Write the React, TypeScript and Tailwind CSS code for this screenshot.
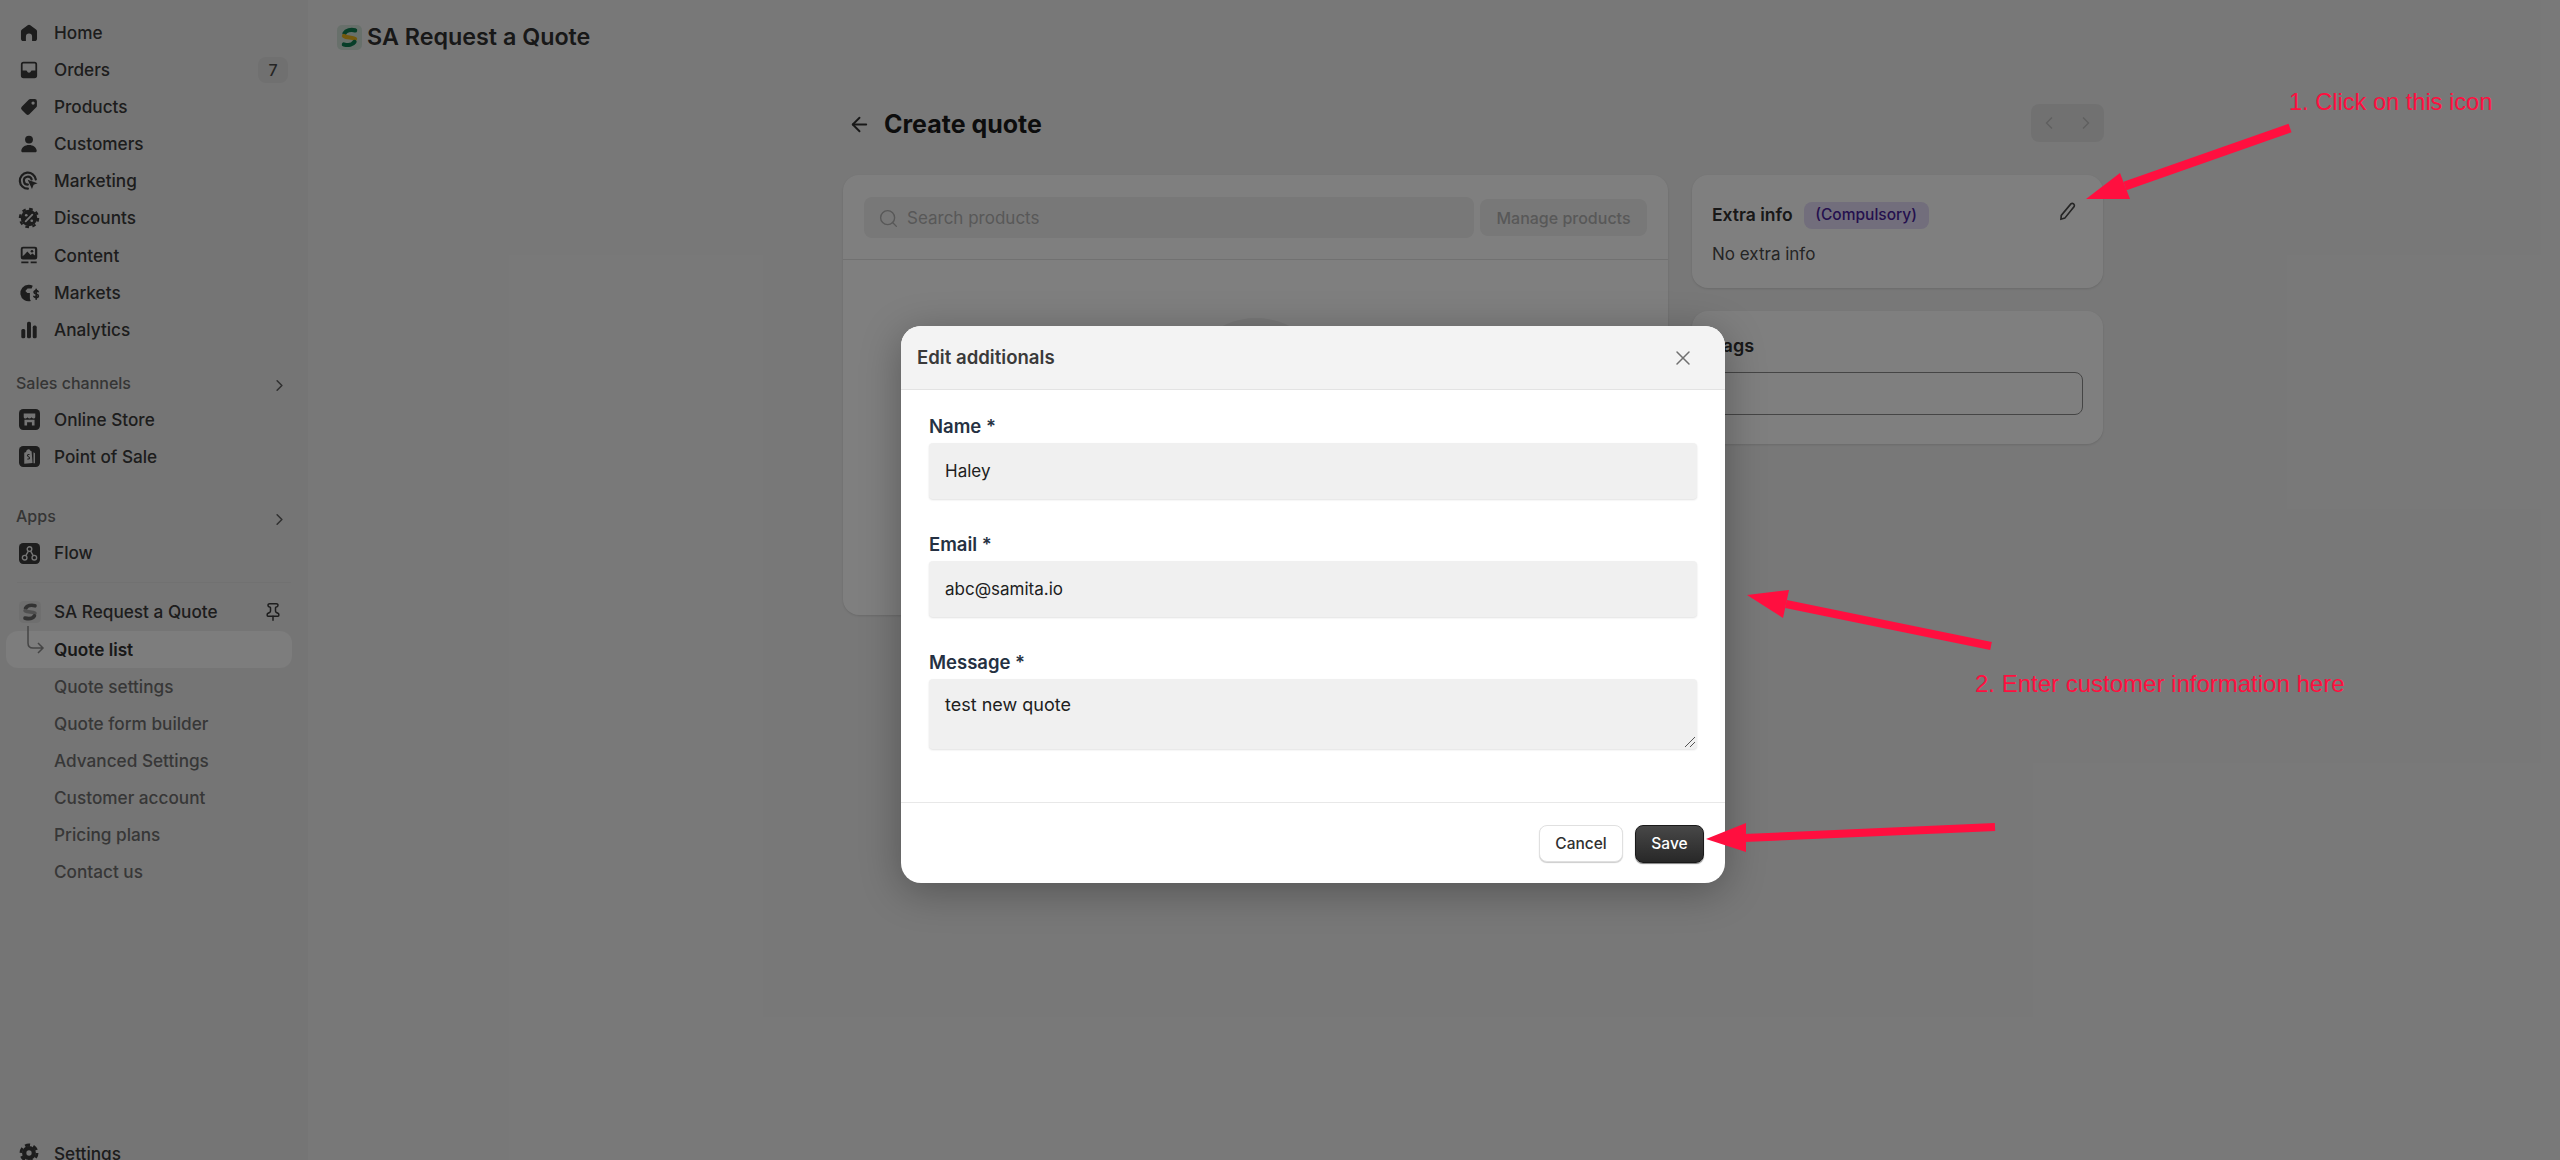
import { ArrowLeft, ChevronLeft, ChevronRight, Pin, Search, X } from "lucide-react";
import type { ReactNode } from "react";

function Glyph({ children, className = "" }: { children: ReactNode; className?: string }) {
  return (
    <svg viewBox="0 0 20 20" fill="currentColor" className={`h-[22px] w-[22px] ${className}`}>
      {children}
    </svg>
  );
}

const HomeIcon = () => (
  <Glyph>
    <path d="M8.8 2.9 3.6 6.8A2.2 2.2 0 0 0 2.7 8.6v6.6c0 1.2 1 2.1 2.1 2.1h2.4v-4a2.8 2.8 0 0 1 5.6 0v4h2.4c1.2 0 2.1-.9 2.1-2.1V8.6c0-.7-.3-1.4-.9-1.8l-5.2-3.9a1.9 1.9 0 0 0-2.4 0z" />
  </Glyph>
);

const OrdersIcon = () => (
  <Glyph>
    <path
      fillRule="evenodd"
      d="M5 2.6h10A2.4 2.4 0 0 1 17.4 5v10a2.4 2.4 0 0 1-2.4 2.4H5A2.4 2.4 0 0 1 2.6 15V5A2.4 2.4 0 0 1 5 2.6zM4.2 5v5.4h3.2c.4 0 .7.3.8.6.2.9 1 1.5 1.8 1.5s1.6-.6 1.8-1.5c.1-.3.4-.6.8-.6h3.2V5c0-.4-.4-.8-.8-.8H5c-.4 0-.8.4-.8.8z"
    />
  </Glyph>
);

const ProductsIcon = () => (
  <Glyph>
    <path
      fillRule="evenodd"
      d="M11.2 2.8h4a2 2 0 0 1 2 2v4c0 .6-.2 1.100-.6 1.500l-6.300 6.300a2 2 0 0 1-2.800 0l-4.100-4.100a2 2 0 0 1 0-2.800l6.300-6.300c.4-.4.9-.6 1.500-.6zM13.700 7.900a1.500 1.500 0 1 0 0-3 1.500 1.500 0 0 0 0 3z"
    />
  </Glyph>
);

const CustomersIcon = () => (
  <Glyph>
    <circle cx="10" cy="6" r="3.600" />
    <path d="M10 11c-3.700 0-6.500 2-7 4.800-.2 1 .5 1.700 1.400 1.700h11.200c.9 0 1.600-.7 1.400-1.700-.5-2.800-3.300-4.800-7-4.800z" />
  </Glyph>
);

const MarketingIcon = () => (
  <Glyph>
    <path
      d="M9 17a7.300 7.300 0 1 1 7.200-8.400M9 13.300a3.600 3.600 0 1 1 3.400-4.700"
      fill="none"
      stroke="currentColor"
      strokeWidth="2"
      strokeLinecap="round"
    />
    <path d="m8.800 8.800 9 3.200-3.600 1.500-1.500 3.800z" />
  </Glyph>
);

const DiscountsIcon = () => (
  <Glyph>
    <circle cx="10" cy="10" r="7.500" />
    <circle cx="10" cy="10" r="8.300" fill="none" stroke="currentColor" strokeWidth="2" strokeDasharray="3.300 3.200" />
    <path d="m7 13 6-6" stroke="#ebebeb" strokeWidth="1.700" strokeLinecap="round" />
    <circle cx="7.500" cy="7.500" r="1.200" fill="#ebebeb" />
    <circle cx="12.500" cy="12.500" r="1.200" fill="#ebebeb" />
  </Glyph>
);

const ContentIcon = () => (
  <Glyph>
    <path
      fillRule="evenodd"
      d="M4.500 2.500h11a2 2 0 0 1 2 2v7.500a2 2 0 0 1-2 2h-11a2 2 0 0 1-2-2V4.500a2 2 0 0 1 2-2zM6 9.500l2.500-2.600 3 3 1.500-1.200 2.500 1.800V4.800a.6.6 0 0 0-.6-.6H4.800a.6.6 0 0 0-.6.6v6.300z"
    />
    <circle cx="12.700" cy="6.600" r="1.200" />
    <path d="M3 16h6.500v1.500H3zM11.500 16H17v1.500h-5.500z" />
  </Glyph>
);

const MarketsIcon = () => (
  <Glyph>
    <path d="M9.500 2.500a7.500 7.500 0 1 0 2.200 14.700c-.6-.7-.9-1.500-.9-2.400V10H8.500L6.700 8.200l2-2.200h3.700l1-2.700a7.500 7.500 0 0 0-3.900-.8z" />
    <path
      d="M18.300 8.800c-.4-.6-1-.9-1.800-.9-1.200 0-1.900.7-1.900 1.500 0 2 3.900 1 3.900 3.100 0 .9-.8 1.600-2 1.600-.8 0-1.500-.4-2-1M16.500 6.600v9"
      fill="none"
      stroke="currentColor"
      strokeWidth="1.500"
      strokeLinecap="round"
    />
  </Glyph>
);

const AnalyticsIcon = () => (
  <Glyph>
    <rect x="3" y="9" width="3.600" height="8.500" rx="1.400" />
    <rect x="8.200" y="2.500" width="3.600" height="15" rx="1.400" />
    <rect x="13.400" y="6" width="3.600" height="11.500" rx="1.400" />
  </Glyph>
);

const SettingsIcon = () => (
  <Glyph>
    <circle cx="10" cy="10" r="6.300" />
    <circle cx="10" cy="10" r="7.300" fill="none" stroke="currentColor" strokeWidth="2.600" strokeDasharray="4.600 3.040" />
    <circle cx="10" cy="10" r="2.400" fill="#ebebeb" />
  </Glyph>
);

const StoreIcon = () => (
  <svg viewBox="0 0 20 20" className="ml-px h-[21px] w-[21px]">
    <rect width="20" height="20" rx="4" fill="currentColor" />
    <path
      d="M4.500 4.200h11v3.300c0 1-1 1.500-1.800 1.500S12 8.400 12 7.700c0 .7-1 1.300-2 1.300s-2-.6-2-1.300c0 .7-.9 1.300-1.700 1.300S4.500 8.500 4.500 7.500zM5.200 10.300h9.600v5.500h-2.500v-3.300H7.700v3.300H5.200z"
      fill="#ebebeb"
    />
  </svg>
);

const PosIcon = () => (
  <svg viewBox="0 0 20 20" className="ml-px h-[21px] w-[21px]">
    <rect width="20" height="20" rx="4" fill="currentColor" />
    <path
      d="M5 6.500 6.700 5.600C7 4 8 3 9.200 3c1 0 1.600.8 1.800 1.800l1 .3.900 11.200L5 17zM13.800 6v10.500h1.400V6.800z"
      fill="#ebebeb"
    />
    <path d="M10 8.200c-1-.4-2 .1-2 .9 0 1.100 2 1 2 2.300 0 .9-1.100 1.300-2.100.9" stroke="currentColor" strokeWidth="1" fill="none" />
  </svg>
);

const FlowIcon = () => (
  <svg viewBox="0 0 20 20" className="ml-px h-[21px] w-[21px]">
    <rect width="20" height="20" rx="4" fill="currentColor" />
    <g fill="none" stroke="#ebebeb" strokeWidth="1.300">
      <circle cx="10" cy="5.800" r="2.200" />
      <circle cx="5.400" cy="14" r="2.200" />
      <circle cx="14.600" cy="14" r="2.200" />
      <path d="m8.900 7.800-2.400 4.200M11.100 7.800l2.400 4.200" />
    </g>
  </svg>
);

const SamitaMark = ({ colored }: { colored?: boolean }) => (
  <svg viewBox="0 0 20 20" className={colored ? "h-[25px] w-[25px]" : "h-[22px] w-[22px]"} fill="none" strokeWidth="3.400" strokeLinecap="round">
    <rect width="20" height="20" rx="4" fill={colored ? "#a9cdb9" : "#8a8a8a"} stroke="none" opacity={colored ? 0.45 : 0.12} />
    <path d="M14.500 4.300C11 3.400 7.300 4.300 6 6.600" stroke={colored ? "#0f7d50" : "#666666"} />
    <path d="M5.600 8.800c2.600 1.800 6.600.6 8.800 2.400" stroke={colored ? "#e6b31d" : "#a0a0a0"} />
    <path d="M14 13.500c-1.400 2.300-5 3-8.500 2.100" stroke={colored ? "#0f7d50" : "#666666"} />
  </svg>
);

function NavRow({
  icon,
  label,
  badge,
}: {
  icon: ReactNode;
  label: string;
  badge?: string;
}) {
  return (
    <div className="flex h-[37.15px] items-center pr-[20px] pl-[18px] text-[17.2px] font-medium text-[#3a3a3a]">
      <span className="flex w-[36px] shrink-0">{icon}</span>
      <span className="flex-1">{label}</span>
      {badge && (
        <span className="flex h-[26px] w-[30px] items-center justify-center rounded-lg bg-[#e0e0e0] text-[16px] text-[#4a4a4a]">
          {badge}
        </span>
      )}
    </div>
  );
}

function SectionTitle({ label, className = "" }: { label: string; className?: string }) {
  return (
    <div className={`flex h-[37px] items-center justify-between pr-[19px] pl-[16px] text-[16px] font-medium text-[#6b6b6b] ${className}`}>
      <span>{label}</span>
      <ChevronRight size={19} className="mt-1.5 text-[#616161]" />
    </div>
  );
}

const mainNav = [
  { label: "Home", icon: <HomeIcon /> },
  { label: "Orders", icon: <OrdersIcon />, badge: "7" },
  { label: "Products", icon: <ProductsIcon /> },
  { label: "Customers", icon: <CustomersIcon /> },
  { label: "Marketing", icon: <MarketingIcon /> },
  { label: "Discounts", icon: <DiscountsIcon /> },
  { label: "Content", icon: <ContentIcon /> },
  { label: "Markets", icon: <MarketsIcon /> },
  { label: "Analytics", icon: <AnalyticsIcon /> },
];

const subNav = [
  "Quote settings",
  "Quote form builder",
  "Advanced Settings",
  "Customer account",
  "Pricing plans",
  "Contact us",
];

function Sidebar() {
  return (
    <aside className="flex h-[1160px] w-[308px] shrink-0 flex-col overflow-hidden bg-[#ebebeb] pt-[14px]">
      {mainNav.map((item) => (
        <NavRow key={item.label} {...item} />
      ))}
      <SectionTitle label="Sales channels" className="mt-4" />
      <NavRow icon={<StoreIcon />} label="Online Store" />
      <NavRow icon={<PosIcon />} label="Point of Sale" />
      <SectionTitle label="Apps" className="mt-[22px]" />
      <NavRow icon={<FlowIcon />} label="Flow" />
      <div className="mx-[17px] mt-[10px] mb-[11px] h-px bg-[#e3e3e3]" />
      <div className="flex h-[37.15px] items-center pr-[25px] pl-[19px] text-[17.2px] font-medium text-[#3a3a3a]">
        <span className="flex w-[35px] shrink-0">
          <SamitaMark />
        </span>
        <span className="flex-1">SA Request a Quote</span>
        <Pin size={20} strokeWidth={1.8} />
      </div>
      <div className="relative mr-[16px] ml-1.5 flex h-[37.15px] items-center rounded-xl bg-[#fafafa] pl-[48px] text-[17.2px] font-semibold text-[#303030]">
        Quote list
        <svg viewBox="0 0 20 34" className="absolute top-[-6px] left-[20px] h-[34px] w-5 text-[#8a8a8a]" fill="none" stroke="currentColor" strokeWidth="1.500">
          <path d="M2 1v17c0 3 2 5 5 5h10M12 18l5 5-5 5" />
        </svg>
      </div>
      {subNav.map((label) => (
        <div key={label} className="flex h-[37.15px] items-center pl-[54px] text-[17.2px] font-medium text-[#6f6f6f]">
          {label}
        </div>
      ))}
      <div className="mt-auto -mb-3">
        <NavRow icon={<SettingsIcon />} label="Settings" />
      </div>
    </aside>
  );
}

function QuoteCard() {
  return (
    <div className="h-[440px] w-[825px] overflow-hidden rounded-2xl bg-white shadow-sm">
      <div className="flex h-[85px] items-start gap-1.5 border-b border-[#e3e3e3] pt-[22px] pr-[21px] pl-[21px]">
        <div className="flex h-[41px] flex-1 items-center gap-2 rounded-lg bg-[#f0f0f0] pt-0.5 pl-3.5 text-[17px] text-[#b0b0b0]">
          <Search size={21} strokeWidth={1.6} />
          Search products
        </div>
        <div className="mt-0.5 flex h-[37px] w-[167px] items-center justify-center rounded-lg bg-[#f0f0f0] text-[16px] font-medium text-[#b0b0b0]">
          Manage products
        </div>
      </div>
      <div className="mx-auto mt-[58px] h-[150px] w-[150px] rounded-full bg-[#f1f1f1]" />
    </div>
  );
}

function SideCards() {
  return (
    <div className="flex w-[411px] flex-col gap-[23px]">
      <div className="flex h-[113px] flex-col rounded-2xl bg-white px-5 pt-[25px] shadow-sm">
        <div className="flex items-center">
          <span className="text-[17.500px] font-semibold text-[#303030]">Extra info</span>
          <span className="ml-[11px] flex h-[27px] w-[125px] items-center justify-center rounded-lg bg-[#e4dcf8] text-[15.500px] font-medium text-[#4a1f9c]">
            (Compulsory)
          </span>
          <svg viewBox="0 0 20 20" className="mr-[5px] mb-2 ml-auto h-[22px] w-[22px] text-[#4a4a4a]" fill="none" stroke="currentColor" strokeWidth="1.500">
            <path d="M13.500 3.500a2 2 0 0 1 3 2.500L8 16.500l-3.500 1 .3-3.500z" />
          </svg>
        </div>
        <p className="mt-3 text-[17px] text-[#4a4a4a]">No extra info</p>
      </div>
      <div className="h-[133px] rounded-2xl bg-white px-5 pt-[21px] shadow-sm">
        <p className="text-[18px] font-semibold text-[#303030]">Tags</p>
        <div className="mt-[13px] h-[43px] rounded-lg border border-[#8a8a8a]" />
      </div>
    </div>
  );
}

function Page() {
  return (
    <main className="flex-1 bg-[#f1f1f1]">
      <div className="flex h-[75px] items-center gap-[5px] pl-[29px]">
        <SamitaMark colored />
        <span className="text-[23.300px] font-semibold text-[#303030]">SA Request a Quote</span>
      </div>
      <div className="ml-[535px] w-[1261px]">
        <div className="flex h-[100px] items-start justify-between pt-[29px]">
          <div className="flex items-center gap-[12px] pl-[5px]">
            <ArrowLeft size={23} className="text-[#303030]" />
            <h1 className="ml-px text-[25px] leading-[40px] font-bold text-[#1a1a1a]">Create quote</h1>
          </div>
          <div className="flex h-[38px] w-[73px] items-center justify-between rounded-lg bg-[#e3e3e3] px-2 text-[#c0c0c0]">
            <ChevronLeft size={20} />
            <ChevronRight size={20} />
          </div>
        </div>
        <div className="flex gap-6">
          <QuoteCard />
          <SideCards />
        </div>
      </div>
    </main>
  );
}

function Field({ label, value, className = "" }: { label: string; value: string; className?: string }) {
  return (
    <div className={className}>
      <p className="pt-px text-[18.500px] leading-[24px] font-semibold text-[#253142]">{label}</p>
      <div className="mt-[5px] flex h-[56px] items-center rounded-sm bg-[#f0f0f0] pt-0.5 pl-4 text-[17px] text-[#202020] shadow-[0_1px_2px_rgba(0,0,0,0.12)]">
        {value}
      </div>
    </div>
  );
}

function EditModal() {
  return (
    <div className="absolute inset-0 bg-black/50">
      <div className="mt-[326px] ml-[901px] w-[824px] overflow-hidden rounded-[20px] bg-white shadow-[0_8px_40px_rgba(0,0,0,0.3)]">
        <div className="flex h-[64px] items-center justify-between border-b border-[#e3e3e3] bg-[#f3f3f3] pr-[30px] pl-4">
          <span className="text-[18.600px] font-semibold text-[#3a3a3a]">Edit additionals</span>
          <X size={24} strokeWidth={1.5} className="text-[#707070]" />
        </div>
        <div className="px-7 pt-[23px]">
          <Field label="Name *" value="Haley" />
          <Field label="Email *" value="abc@samita.io" className="mt-[32px]" />
          <div className="mt-[32px]">
            <p className="pt-px text-[18.500px] leading-[24px] font-semibold text-[#253142]">Message *</p>
            <div className="relative mt-[5px] h-[70px] rounded-sm bg-[#f0f0f0] pt-[14px] pl-4 text-[18px] leading-[24px] text-[#202020] shadow-[0_1px_2px_rgba(0,0,0,0.12)]">
              test new quote
              <svg viewBox="0 0 12 12" className="absolute right-[1px] bottom-[1px] h-3 w-3 text-[#555555]" fill="none" stroke="currentColor" strokeWidth="1">
                <path d="M1 11 11 1M6 11l5-5" />
              </svg>
            </div>
          </div>
        </div>
        <div className="mt-[53px] flex h-[81px] items-start justify-end gap-[12px] border-t border-[#e8e8e8] pt-[22px] pr-[21px]">
          <div className="flex h-[37px] w-[84px] items-center justify-center rounded-lg border border-[#e0e0e0] bg-white text-[15.500px] font-medium text-[#303030] shadow-[0_1px_1px_rgba(0,0,0,0.2)]">
            Cancel
          </div>
          <div className="flex h-[38px] w-[69px] items-center justify-center rounded-lg border border-[#1a1a1a] bg-gradient-to-b from-[#484848] to-[#282828] text-[15.500px] font-medium text-white shadow-[0_1px_1px_rgba(0,0,0,0.5)]">
            Save
          </div>
        </div>
      </div>
    </div>
  );
}

function Annotations() {
  return (
    <>
      <svg viewBox="0 0 2560 1160" className="absolute inset-0 h-[1160px] w-[2560px]" fill="#ff0f3f" stroke="none">
        <path d="M2290 128 2125 186" stroke="#ff0f3f" strokeWidth="9" />
        <polygon points="2086,199 2120,173 2130,199" />
        <path d="M1991 646 1786 604" stroke="#ff0f3f" strokeWidth="8" />
        <polygon points="1747,595 1789,590 1783,618" />
        <path d="M1995 827 1744 838" stroke="#ff0f3f" strokeWidth="8" />
        <polygon points="1706,839 1746,823 1746,852" />
      </svg>
      <span className="absolute top-[87px] left-[2289px] font-['Liberation_Sans',sans-serif] text-[23.600px] leading-[30px] text-[#ff0f3f]">
        1. Click on this icon
      </span>
      <span className="absolute top-[669px] left-[1975px] font-['Liberation_Sans',sans-serif] text-[24px] leading-[30px] text-[#ff0f3f]">
        2. Enter customer information here
      </span>
    </>
  );
}

export default function App() {
  return (
    <div className="relative flex h-[1160px] w-[2560px] overflow-hidden font-['Inter',sans-serif]">
      <Sidebar />
      <Page />
      <EditModal />
      <Annotations />
    </div>
  );
}
